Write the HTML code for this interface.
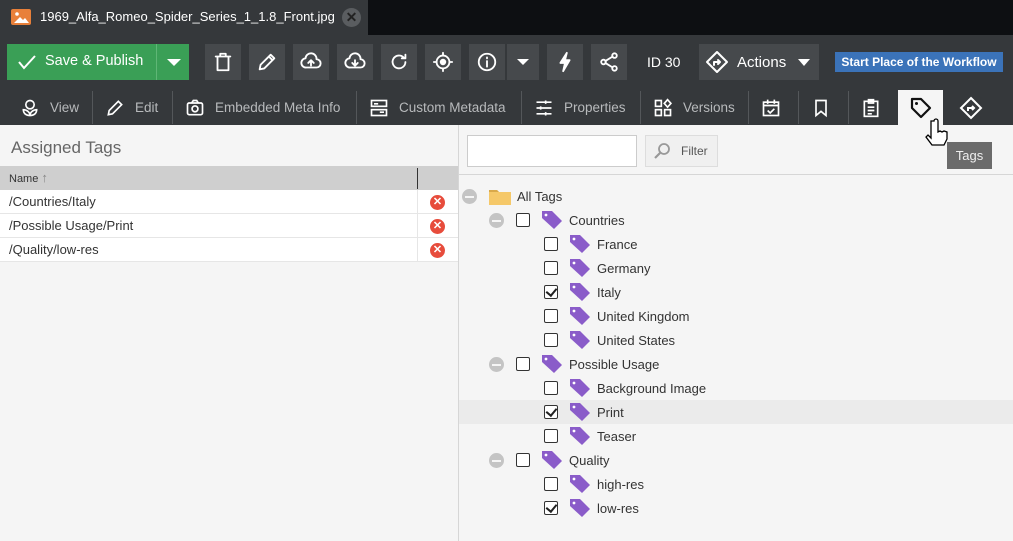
<!DOCTYPE html>
<html><head><meta charset="utf-8"><style>
*{box-sizing:border-box;margin:0;padding:0}
body{width:1013px;height:541px;overflow:hidden;background:#f5f5f5;font-family:"Liberation Sans",sans-serif;position:relative;font-size:13px;color:#333}
.abs{position:absolute}
.top{left:0;top:0;width:1013px;height:125px;background:#35383b}
.tabbar{left:0;top:0;width:1013px;height:35px;background:#0d0f12}
.tab{left:0;top:0;width:368px;height:35px;background:#35383b;color:#fff;font-size:13px}
.btn{position:absolute;top:44px;height:36px;background:#46494c;display:flex;align-items:center;justify-content:center}
.btn svg{width:22px;height:22px;stroke:#fff;fill:none;stroke-width:2;stroke-linecap:round;stroke-linejoin:round}
.nav{position:absolute;top:90px;height:35px;display:flex;align-items:center;color:#b8babc;font-size:13.5px}
.nav svg{width:20px;height:20px;stroke:#fff;fill:none;stroke-width:2;margin-right:10px}
.sep{position:absolute;top:91px;width:1px;height:33px;background:#54575a}
.row{position:absolute;left:0;width:458px;height:24px;background:#fff;border-bottom:1px solid #e6e6e6;font-size:13px;line-height:23px;padding-left:9px}
.x{position:absolute;left:430px;top:5px;width:15px;height:15px;border-radius:50%;background:#e74c3c;color:#fff;font-size:11px;line-height:15px;text-align:center;font-weight:bold}
.t{position:absolute;height:24px;display:flex;align-items:center;font-size:13px;color:#333}
.cb{width:14px;height:14px;border:1.5px solid #333;border-radius:2px;background:#fff;margin-right:11px;position:relative}
.cb.c::after{content:"";position:absolute;left:3px;top:0px;width:5px;height:8px;border:solid #222;border-width:0 2.5px 2.5px 0;transform:rotate(40deg)}
.tag{width:22px;height:20px;margin-right:6px}
.minus{position:absolute;width:15px;height:15px;border-radius:50%;background:#c4c4c4}
.minus::after{content:"";position:absolute;left:3px;top:6.5px;width:9px;height:2px;background:#f5f5f5}
</style></head><body>
<div class="abs top"></div>
<div class="abs tabbar"></div>
<div class="abs tab">
 <div class="abs" style="left:11px;top:9px;width:20px;height:16px;background:#e8803a;border-radius:2px"></div>
 <svg class="abs" style="left:11px;top:9px" width="20" height="16"><circle cx="6" cy="5" r="1.8" fill="#fff"/><path d="M3 14 L9 8 L12 11 L14 9 L18 14Z" fill="#fff"/></svg>
 <div class="abs" style="left:40px;top:9px;font-size:13px">1969_Alfa_Romeo_Spider_Series_1_1.8_Front.jpg</div>
 <div class="abs" style="left:342px;top:8px;width:19px;height:19px;border-radius:50%;background:#5a5d60;color:#222;font-weight:bold;text-align:center;line-height:19px;font-size:14px">✕</div>
</div>
<div class="abs" style="left:7px;top:44px;width:182px;height:36px;background:#3a9f56;color:#fff;font-size:14.5px">
 <svg class="abs" style="left:10px;top:9px" width="20" height="18"><path d="M2 9 L7 15 L18 3" stroke="#fff" stroke-width="2" fill="none"/></svg>
 <div class="abs" style="left:38px;top:9px">Save &amp; Publish</div>
 <div class="abs" style="left:149px;top:0;width:1px;height:36px;background:#5fb676"></div>
 <div class="abs" style="left:160px;top:15px;border-left:7px solid transparent;border-right:7px solid transparent;border-top:7px solid #fff"></div>
</div>
<div class="btn" style="left:205px;width:36px"><svg viewBox="0 0 24 24"><path d="M4 6h16M9 6V3h6v3M6 6v15h12V6"/></svg></div>
<div class="btn" style="left:249px;width:36px"><svg viewBox="0 0 24 24"><path d="M4 20l1-5L16 4l4 4L9 19zM14 6l4 4"/></svg></div>
<div class="btn" style="left:293px;width:36px"><svg viewBox="0 0 24 24"><path d="M7 18a5 5 0 01-1-10 6 6 0 0112 1 4 4 0 010 9zM12 16v-6M9 13l3-3 3 3"/></svg></div>
<div class="btn" style="left:337px;width:36px"><svg viewBox="0 0 24 24"><path d="M7 18a5 5 0 01-1-10 6 6 0 0112 1 4 4 0 010 9zM12 10v6M9 13l3 3 3-3"/></svg></div>
<div class="btn" style="left:381px;width:36px"><svg viewBox="0 0 24 24"><path d="M19 12a7 7 0 11-2-5M19 4v4h-4"/></svg></div>
<div class="btn" style="left:425px;width:36px"><svg viewBox="0 0 24 24"><circle cx="12" cy="12" r="7"/><circle cx="12" cy="12" r="2.5" fill="#fff"/><path d="M12 2v3M12 19v3M2 12h3M19 12h3"/></svg></div>
<div class="btn" style="left:469px;width:36px"><svg viewBox="0 0 24 24"><circle cx="12" cy="12" r="9"/><path d="M12 11v6M12 7v1"/></svg></div>
<div class="btn" style="left:507px;width:32px"><div style="border-left:6px solid transparent;border-right:6px solid transparent;border-top:6px solid #fff"></div></div>
<div class="btn" style="left:547px;width:36px"><svg viewBox="0 0 24 24"><path d="M14 2L7 13h5l-2 9 7-12h-5z" fill="#fff"/></svg></div>
<div class="btn" style="left:591px;width:36px"><svg viewBox="0 0 24 24"><circle cx="18" cy="5" r="2.5"/><circle cx="6" cy="12" r="2.5"/><circle cx="18" cy="19" r="2.5"/><path d="M8 11l8-5M8 13l8 5"/></svg></div>
<div class="abs" style="left:647px;top:54px;color:#fff;font-size:14px">ID 30</div>
<div class="btn" style="left:699px;width:120px;justify-content:flex-start;padding-left:6px;color:#fff;font-size:15px"><svg viewBox="0 0 24 24" style="width:24px;height:24px"><path d="M12 2l10 10-10 10L2 12z"/><path d="M9 15v-3h6M13 10l2 2-2 2"/></svg><span style="margin-left:8px">Actions</span><div style="margin-left:12px;border-left:6px solid transparent;border-right:6px solid transparent;border-top:7px solid #fff"></div></div>
<div class="abs" style="left:835px;top:52px;width:168px;height:20px;background:#3b73b9;color:#fff;font-weight:bold;font-size:12px;line-height:20px;text-align:center">Start Place of the Workflow</div>

<div class="nav" style="left:20px"><svg viewBox="0 0 24 24"><circle cx="12" cy="8" r="5"/><path d="M4 14c0 5 4 7 8 7 0-4-4-7-8-7zM20 14c0 5-4 7-8 7 0-4 4-7 8-7z"/></svg>View</div>
<div class="sep" style="left:92px"></div>
<div class="nav" style="left:105px"><svg viewBox="0 0 24 24"><path d="M4 20l1-5L16 4l4 4L9 19z"/></svg>Edit</div>
<div class="sep" style="left:172px"></div>
<div class="nav" style="left:185px"><svg viewBox="0 0 24 24"><rect x="3" y="6" width="18" height="14" rx="2"/><circle cx="12" cy="13" r="3.5"/><path d="M8 6l2-3h4l2 3"/></svg>Embedded Meta Info</div>
<div class="sep" style="left:356px"></div>
<div class="nav" style="left:369px"><svg viewBox="0 0 24 24"><rect x="3" y="3" width="18" height="7"/><rect x="3" y="14" width="18" height="7"/><path d="M6 7h5M13 17h5"/></svg>Custom Metadata</div>
<div class="sep" style="left:521px"></div>
<div class="nav" style="left:534px"><svg viewBox="0 0 24 24"><path d="M3 5h18M3 12h18M3 19h18M14 3v4M8 10v4M14 17v4"/></svg>Properties</div>
<div class="sep" style="left:640px"></div>
<div class="nav" style="left:653px"><svg viewBox="0 0 24 24"><rect x="3" y="3" width="7" height="7"/><rect x="3" y="14" width="7" height="7"/><rect x="14" y="14" width="7" height="7"/><path d="M17.5 2l4 4.5-4 4.5-4-4.5z"/></svg>Versions</div>
<div class="sep" style="left:748px"></div>
<div class="nav" style="left:761px"><svg viewBox="0 0 24 24"><rect x="3" y="5" width="18" height="16"/><path d="M3 9h18M8 2v5M16 2v5M8 15l3 3 5-5"/></svg></div>
<div class="sep" style="left:798px"></div>
<div class="nav" style="left:811px"><svg viewBox="0 0 24 24"><path d="M6 3h12v18l-6-5-6 5z"/></svg></div>
<div class="sep" style="left:848px"></div>
<div class="nav" style="left:861px"><svg viewBox="0 0 24 24"><rect x="4" y="4" width="16" height="18"/><path d="M9 2h6v4H9zM8 11h8M8 15h8M8 19h5"/></svg></div>
<div class="abs" style="left:898px;top:90px;width:45px;height:35px;background:#f5f5f5"></div>
<svg class="abs" style="left:909px;top:96px" width="24" height="24" viewBox="0 0 24 24"><path d="M3 3h9l9 9-9 9-9-9z" stroke="#111" stroke-width="2.2" fill="none" stroke-linejoin="round"/><circle cx="7.5" cy="7.5" r="1.5" fill="#111"/></svg>
<div class="nav" style="left:959px"><svg viewBox="0 0 24 24" style="width:24px;height:24px"><path d="M12 2l10 10-10 10L2 12z"/><path d="M9 15v-3h6M13 10l2 2-2 2"/></svg></div>

<div class="abs" style="left:11px;top:138px;font-size:17px;color:#666">Assigned Tags</div>
<div class="abs" style="left:0;top:166px;width:458px;height:24px;background:#cfcfcf;font-size:11px;line-height:24px;padding-left:9px;color:#333">Name <span style="color:#888;font-size:13px">&#x2191;</span></div>
<div class="abs" style="left:417px;top:168px;width:1px;height:21px;background:#333"></div>
<div class="row" style="top:190px">/Countries/Italy<div class="x">✕</div></div>
<div class="row" style="top:214px">/Possible Usage/Print<div class="x">✕</div></div>
<div class="row" style="top:238px">/Quality/low-res<div class="x">✕</div></div>
<div class="abs" style="left:417px;top:190px;width:1px;height:72px;background:#e6e6e6"></div>
<div class="abs" style="left:458px;top:125px;width:1px;height:416px;background:#d6d6d6"></div>

<div class="abs" style="left:467px;top:135px;width:170px;height:32px;background:#fff;border:1px solid #ccc"></div>
<div class="abs" style="left:645px;top:135px;width:73px;height:32px;background:#f0f0f0;border:1px solid #ddd;font-size:12px;color:#555;line-height:30px;padding-left:35px">Filter</div>
<svg class="abs" style="left:652px;top:141px" width="20" height="20"><circle cx="12" cy="8" r="5" stroke="#999" stroke-width="1.8" fill="none"/><path d="M8 12L3 17" stroke="#999" stroke-width="2.2"/></svg>
<div class="abs" style="left:459px;top:174px;width:554px;height:1px;background:#d6d6d6"></div>
<div class="abs" style="left:459px;top:400px;width:554px;height:24px;background:#ebebeb"></div>

<div class="minus" style="left:462px;top:189px"></div>
<svg class="abs" style="left:488px;top:187px" width="24" height="19"><path d="M1 3h8l2 2h12v13H1z" fill="#f5c869"/><path d="M1 3h8l2 2H1z" fill="#d9a94a"/></svg>
<div class="t" style="left:517px;top:184px">All Tags</div>

<div id="tree"></div>
<script>
var rows=[[1,"Countries",0],[2,"France",0],[2,"Germany",0],[2,"Italy",1],[2,"United Kingdom",0],[2,"United States",0],[1,"Possible Usage",0],[2,"Background Image",0],[2,"Print",1],[2,"Teaser",0],[1,"Quality",0],[2,"high-res",0],[2,"low-res",1]];
var h="";rows.forEach(function(r,i){var y=208+i*24;var x=r[0]==1?516:544;
if(r[0]==1)h+='<div class="minus" style="left:489px;top:'+(y+5)+'px"></div>';
h+='<div class="t" style="left:'+x+'px;top:'+y+'px"><div class="cb'+(r[2]?' c':'')+'"></div><svg class="tag" viewBox="0 0 22 20"><path d="M1 1h10l10 10-8 8L1 8z" fill="#8a5cc9"/><circle cx="5" cy="5" r="1.4" fill="#fff"/></svg>'+r[1]+'</div>';});
document.getElementById("tree").innerHTML=h;
</script>
<div class="abs" style="left:947px;top:142px;width:45px;height:27px;background:#6b6b6b;color:#eee;font-size:13px;line-height:27px;text-align:center">Tags</div>
<svg class="abs" style="left:924px;top:117px" width="28" height="34"><path d="M7 4v17l-3-3-2 2 6 8h12l3-6v-7l-3-1-2 1-2-1-2 1V4a2 2 0 00-4 0z" fill="#fff" stroke="#000" stroke-width="1.3"/></svg>
</body></html>
